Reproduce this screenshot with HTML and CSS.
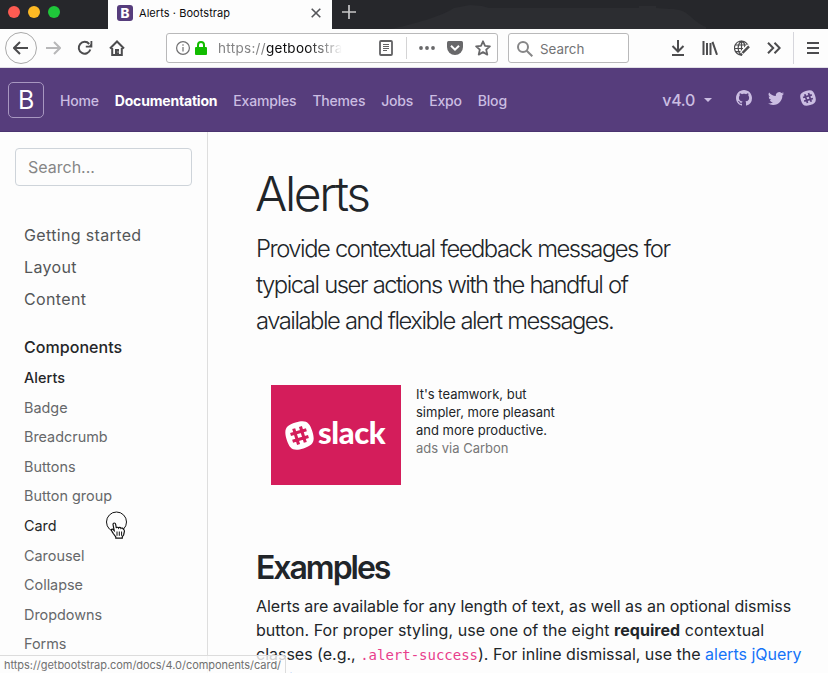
FILE: index.html
```html
<!DOCTYPE html>
<html lang="en">
<head>
<meta charset="utf-8">
<title>Alerts · Bootstrap</title>
<link rel="stylesheet" href="styles.css">
</head>
<body>
<div class="window">
  <header class="tabs">
    <svg class="tabs-shade" width="496" height="29" viewBox="0 0 496 29"><path d="M58 29C80 25 112 15 122 8l16-3 12 1 7 2h150V6h17v2l14 1c20 0 18 10 36 18v2z"/></svg>
    <div class="lights"><i class="red"></i><i class="yellow"></i><i class="green"></i></div>
    <div class="tab">
      <span class="favicon">B</span>
      <span class="tab-title">Alerts · Bootstrap</span>
      <svg class="close" width="10" height="10" viewBox="0 0 10 10"><path d="M.7.7l8.6 8.6M9.3.7L.7 9.3"/></svg>
    </div>
    <svg class="plus" width="14" height="14" viewBox="0 0 14 14"><path d="M7 0v14M0 7h14"/></svg>
  </header>

  <div class="toolbar">
    <span class="slot back"><svg width="16" height="14" viewBox="0 0 16 14"><path d="M15 7H1.5M7 1L1 7l6 6"/></svg></span>
    <span class="slot forward"><svg width="16" height="14" viewBox="0 0 16 14"><path d="M1 7h13.5M9 1l6 6-6 6"/></svg></span>
    <span class="slot"><svg width="16" height="16" viewBox="0 0 16 16"><path d="M13.300 9.500A5.900 5.900 0 1 1 12.200 4"/><path class="solid" d="M15.300 1v6.500H8.800V5.700h3.500L13.500 4V1z"/></svg></span>
    <span class="slot"><svg width="16" height="16" viewBox="0 0 16 16"><path d="M1 8.500L8 1.500l7 7M3.200 8v7h9.600V8"/><path class="solid" d="M6 9h4v5H6z"/><path class="knob" d="M8.500 11.500h1v1h-1z"/></svg></span>
    <div class="url">
      <svg class="info" width="14" height="14" viewBox="0 0 14 14"><circle cx="7" cy="7" r="6.400"/><path d="M7 6v4.500M7 3.300v1.500"/></svg>
      <svg class="lock" width="12" height="14" viewBox="0 0 12 14"><path class="shackle" d="M3 7V4a3 3 0 0 1 6 0v3"/><rect x="0" y="6" width="12" height="8" rx="1"/></svg>
      <span class="address"><b>https://</b>getbootstra</span>
      <svg class="reader" width="14" height="16" viewBox="0 0 14 16"><rect x="1" y="1" width="12" height="14" rx="1"/><path d="M4 4.500h6M4 6.500h6M4 8.500h6M4 10.500h4"/></svg>
      <i class="url-line"></i>
      <span class="mini"><svg width="16" height="4" viewBox="0 0 16 4"><g class="solid"><circle cx="2" cy="2" r="1.900"/><circle cx="8" cy="2" r="1.900"/><circle cx="14" cy="2" r="1.900"/></g></svg></span>
      <span class="mini"><svg width="16" height="14" viewBox="0 0 16 14"><path class="solid" d="M1.500 0h13Q16 0 16 1.500V6a8 8 0 0 1-16 0V1.500Q0 0 1.500 0z"/><path class="check" d="M4 4.700l4 3.900 4-3.900"/></svg></span>
      <span class="mini"><svg width="16" height="16" viewBox="0 0 16 16"><path class="star" d="M8 1.300l2 4.500 4.900.5-3.700 3.300 1.100 5L8 12.100l-4.300 2.500 1.100-5L1.100 6.300 6 5.800z"/></svg></span>
    </div>
    <div class="find">
      <svg width="16" height="16" viewBox="0 0 16 16"><circle cx="6" cy="6" r="5"/><path d="M9.700 9.700L15.300 15.300"/></svg>
      <span>Search</span>
    </div>
    <div class="tools">
      <span class="slot"><svg width="14" height="16" viewBox="0 0 14 16"><path d="M7 0v11M1.500 6L7 11.500 12.500 6M1 15h12"/></svg></span>
      <span class="slot"><svg width="16" height="14" viewBox="0 0 16 14"><path d="M1.500 0v14M5 2v12M8.500 2v12M10.500.8L15 13.800"/></svg></span>
      <span class="slot"><svg class="globe" width="16" height="16" viewBox="0 0 16 16"><path d="M14 5.500A7 7 0 1 0 8 15M7.500 1C3.200 4 3.200 11 6.500 14.500M7.500 1C11 3 11 6 10.500 7.500M7.500 1v11M1.500 5H13M1 8.500h8M2 11.700h5"/><path class="gap" d="M15 6L8 13.500"/><path class="pen" d="M15 6.300L8.500 13M8 13.700L6.300 15.200"/></svg></span>
      <span class="slot"><svg width="14" height="12" viewBox="0 0 14 12"><path d="M1 .7L6.200 6 1 11.300M7.500.7L12.700 6l-5.200 5.300"/></svg></span>
      <i class="tool-line"></i>
      <span class="slot"><svg width="12" height="12" viewBox="0 0 12 12"><path d="M0 1h12M0 6h12M0 11h12"/></svg></span>
    </div>
  </div>

  <nav class="navbar">
    <a class="brand">B</a>
    <a>Home</a><a class="active">Documentation</a><a>Examples</a><a>Themes</a><a>Jobs</a><a>Expo</a><a>Blog</a>
    <div class="nav-right">
      <span class="version">v4.0</span><i class="caret"></i>
      <svg width="16" height="16" viewBox="0 0 16 16"><path d="M8 0C3.580 0 0 3.580 0 8c0 3.540 2.290 6.530 5.470 7.590.4.070.55-.17.55-.38 0-.19-.01-.82-.01-1.490-2.010.37-2.530-.49-2.690-.94-.09-.23-.48-.94-.82-1.130-.28-.15-.68-.52-.01-.53.63-.01 1.080.58 1.230.82.72 1.210 1.870.87 2.330.66.07-.52.28-.87.51-1.070-1.780-.2-3.640-.89-3.640-3.950 0-.87.31-1.590.82-2.150-.08-.2-.36-1.020.08-2.120 0 0 .67-.21 2.200.82.64-.18 1.320-.27 2-.27s1.360.09 2 .27c1.530-1.040 2.200-.82 2.200-.82.44 1.100.16 1.920.08 2.120.51.56.82 1.270.82 2.150 0 3.070-1.870 3.750-3.650 3.950.29.25.54.73.54 1.480 0 1.070-.01 1.930-.01 2.200 0 .21.15.46.55.38A8 8 0 0 0 16 8c0-4.420-3.580-8-8-8z"/></svg>
      <svg width="16" height="16" viewBox="0 0 16 16"><path d="M5.026 15c6.038 0 9.341-5.003 9.341-9.334 0-.14 0-.282-.006-.422A6.685 6.685 0 0 0 16 3.542a6.658 6.658 0 0 1-1.889.518 3.301 3.301 0 0 0 1.447-1.817 6.533 6.533 0 0 1-2.087.793A3.286 3.286 0 0 0 7.875 6.030a9.325 9.325 0 0 1-6.767-3.429 3.289 3.289 0 0 0 1.018 4.382A3.323 3.323 0 0 1 .64 6.575v.045a3.288 3.288 0 0 0 2.632 3.218 3.203 3.203 0 0 1-.865.115 3.230 3.230 0 0 1-.614-.057 3.283 3.283 0 0 0 3.067 2.277A6.588 6.588 0 0 1 .78 13.580a6.320 6.320 0 0 1-.78-.045A9.344 9.344 0 0 0 5.026 15z"/></svg>
      <svg width="16" height="16" viewBox="0 0 28 28"><g transform="rotate(-17 14 14)"><path d="M14 1c10 0 13 3 13 13s-3 13-13 13S1 24 1 14 4 1 14 1z"/><path class="hash" d="M10.600 6v16M17.400 6v16M6 10.600h16M6 17.400h16"/></g></svg>
    </div>
  </nav>

  <div class="page">
    <aside class="sidebar">
      <div class="search">Search...</div>
      <a class="section first">Getting started</a>
      <a class="section">Layout</a>
      <a class="section">Content</a>
      <a class="section current">Components</a>
      <a class="sub active">Alerts</a>
      <a class="sub">Badge</a>
      <a class="sub">Breadcrumb</a>
      <a class="sub">Buttons</a>
      <a class="sub">Button group</a>
      <a class="sub hover">Card</a>
      <a class="sub">Carousel</a>
      <a class="sub">Collapse</a>
      <a class="sub">Dropdowns</a>
      <a class="sub">Forms</a>
    </aside>
    <main>
      <h1>Alerts</h1>
      <p class="lead">Provide contextual feedback messages for<br>typical user actions with the handful of<br>available and flexible alert messages.</p>
      <div class="ad">
        <div class="slack">
          <svg width="29" height="29" viewBox="0 0 28 28"><g transform="rotate(-17 14 14)"><path d="M14 1c10 0 13 3 13 13s-3 13-13 13S1 24 1 14 4 1 14 1z"/><path class="hash" d="M10.600 6v16M17.400 6v16M6 10.600h16M6 17.400h16"/></g></svg>
          <span>slack</span>
        </div>
        <p>It's teamwork, but<br>simpler, more pleasant<br>and more productive.<br><span>ads via Carbon</span></p>
      </div>
      <h2>Examples</h2>
      <p class="body"><span class="l1">Alerts are available for any length of text, as well as an optional dismiss</span><br><span class="l2">button. For proper styling, use one of the eight <strong>required</strong> contextual</span><br><span class="l3">classes (e.g., <code>.alert-success</code>). For inline dismissal, use the <a>alerts jQuery</a></span><br><span class="l4"><a>plugin</a>.</span></p>
    </main>
  </div>

  <div class="status">https://getbootstrap.com/docs/4.0/components/card/</div>
  <svg class="pointer" width="24" height="32" viewBox="0 0 24 32"><circle cx="11.500" cy="12" r="10"/><path class="hand" d="M8 14.500c0-2 2.500-2 2.700 0l.6 3.500c.3-1 2-1 2.300 0 .5-1 2.200-.6 2.400.4.800-.8 2.200-.3 2.300.8.900.4 1.200 1.300 1.100 2.300l-.8 3.500-1.300 1.700v1.500h-6.500V27l-2.700-3.700c-.8-1.600-2.300-3-1.600-3.800.8-.8 1.900.2 2.700 1z"/><path class="fingers" d="M12 21.500v4.300M14.300 21.500v4.300M16.600 21.500v4.300"/></svg>
</div>
</body>
</html>
```
FILE: styles.css
```css
* { box-sizing: border-box; }
body { margin: 0; background: #fdfdfd; font-family: Inter, "Liberation Sans", sans-serif; color: #212529; }
p, h1, h2 { margin: 0; }
svg { display: block; flex: none; }
.window { position: relative; width: 828px; height: 673px; overflow: hidden; display: flex; flex-direction: column; }

.tabs { position: relative; flex: none; height: 29px; background: #26272b; display: flex; }
.tabs-shade { position: absolute; left: 332px; top: 0; fill: #2c2d31; }
.lights { width: 108px; display: flex; gap: 8px; padding: 6px 0 0 8px; }
.lights i { width: 12px; height: 12px; border-radius: 50%; }
.red { background: #fd5b52; }
.yellow { background: #fdb924; }
.green { background: #1fc73a; }
.tab { width: 224px; background: #fdfdfd; display: flex; align-items: center; padding: 0 11px 3px 9px; color: #0c0c0d; }
.favicon { width: 16px; height: 16px; border-radius: 3px; background: #563d7c; color: #fff; font-size: 13.5px; font-weight: 800; line-height: 16px; text-align: center; }
.tab-title { font-size: 11px; margin-left: 6px; flex: 1; letter-spacing: .06px; }
.close { stroke: #55565a; stroke-width: 1.6; }
.plus { position: relative; margin: 5px 0 0 10px; stroke: #c7c7c8; stroke-width: 1.7; }

.toolbar { flex: none; height: 39px; display: flex; align-items: center; padding-left: 5px; border-bottom: 1px solid #e1dfe6; background: #fdfdfd; }
.slot { flex: none; width: 32px; height: 32px; display: flex; align-items: center; justify-content: center; }
.slot svg, .reader { fill: none; stroke: #4c4c4e; stroke-width: 2; }
.slot svg .solid { fill: #4c4c4e; stroke: none; }
.slot svg .knob { fill: #fff; stroke: none; }
.back { border: 1px solid #aaa; border-radius: 50%; }
.forward svg { stroke: #b8b8b9; }
.url { flex: none; width: 332px; height: 30px; margin-left: 33px; border: 1px solid #b9b9ba; border-radius: 3px; display: flex; align-items: center; padding-left: 9px; background: #fff; }
.info { fill: none; stroke: #707071; stroke-width: 1.2; }
.lock { margin-left: 5px; fill: #12bc00; }
.shackle { fill: none; stroke: #12bc00; stroke-width: 2; }
.address { width: 124px; margin-left: 11px; white-space: nowrap; font-size: 13.500px; letter-spacing: .3px; color: #0c0c0d; -webkit-mask-image: linear-gradient(90deg, #000 72%, transparent); mask-image: linear-gradient(90deg, #000 72%, transparent); }
.address b { font-weight: 400; color: #848485; }
.reader { margin-left: 37px; stroke: #626264; stroke-width: 1.8; }
.reader path { stroke-width: 1; }
.url-line { width: 1px; height: 22px; background: #d4d4d5; margin: 0 6px 0 13px; }
.mini { width: 28px; display: flex; justify-content: center; }
.mini .solid { fill: #68686a; }
.check { fill: none; stroke: #fff; stroke-width: 2; }
.star { fill: none; stroke: #68686a; stroke-width: 1.8; stroke-linejoin: round; }
.find { flex: none; width: 121px; height: 30px; margin-left: 10px; border: 1px solid #b9b9ba; border-radius: 3px; display: flex; align-items: center; gap: 7px; padding: 1px 0 0 8px; font-size: 13.400px; color: #737374; background: #fff; }
.find svg { fill: none; stroke: #868687; stroke-width: 2; }
.tools { flex: none; display: flex; align-items: center; margin-left: 33px; }
.tool-line { flex: none; width: 1px; height: 32px; background: #d6d6dc; margin: 0 3px; }
.slot svg.globe { stroke-width: 1.2; }
.globe .gap { stroke: #fdfdfd; stroke-width: 5; }
.globe .pen { stroke-width: 2.5; }

.navbar { flex: none; height: 64px; background: #563d7c; border-bottom: 1px solid #4a3470; display: flex; align-items: center; padding-left: 8px; font-size: 14px; font-weight: 500; letter-spacing: -.19px; color: #cbbde2; }
.navbar a { margin-right: 16px; padding-top: 2px; }
.navbar .active { color: #fff; font-weight: 700; }
.navbar .brand { width: 36px; height: 36px; margin-top: 1px; padding: 0; border: 1px solid #a797c0; border-radius: 5px; font-size: 25px; font-weight: 400; line-height: 35px; text-align: center; color: #fff; }
.nav-right { margin-left: auto; margin-right: 12px; display: flex; align-items: center; }
.nav-right svg { fill: #cbbde2; margin: -4px 0 0 16px; }
.version { font-size: 16px; letter-spacing: -.3px; }
.caret { margin: 0 8px 0 9px; border: 4.500px solid transparent; border-top-color: #cbbde2; border-bottom: 0; }
.nav-right .hash { stroke: #563d7c; }
.hash { fill: none; stroke-width: 3; }

.page { flex: 1; min-height: 0; display: flex; }
.sidebar { flex: none; width: 208px; height: 560px; padding: 16px 15px 0; border-right: 1px solid #dedede; }
.search { height: 38px; border: 1px solid #ced4da; border-radius: 4px; padding: 0 12px; line-height: 37px; font-size: 16px; color: #868686; }
.sidebar a { display: block; padding-left: 9px; }
.section { height: 32px; line-height: 32px; font-size: 16px; letter-spacing: .35px; color: #545658; }
.first { margin-top: 33px; }
.current { margin-top: 16px; font-weight: 500; letter-spacing: .05px; color: #252628; }
.sub { height: 29.600px; line-height: 29.600px; font-size: 14.400px; color: #66686a; }
.sub.active { font-weight: 500; letter-spacing: .1px; color: #252628; }
.sub.hover { color: #252628; }

main { padding: 32px 0 0 48px; white-space: nowrap; }
h1 { font-size: 48px; font-weight: 300; line-height: 60px; letter-spacing: -2.400px; text-indent: -1px; }
.lead { margin-top: 7px; font-size: 23.800px; font-weight: 300; line-height: 36px; letter-spacing: -1.480px; word-spacing: .5px; }
.ad { display: flex; gap: 15px; margin: 46px 0 0 15px; }
.slack { width: 130px; height: 100px; background: #d41d5b; display: flex; align-items: center; gap: 4px; padding-left: 14px; }
.slack svg { fill: #fff; }
.slack .hash { stroke: #d41d5b; }
.slack span { font: 900 31px/40px Lato, sans-serif; letter-spacing: -.4px; color: #fff; margin-top: -7px; }
.ad p { font-size: 13px; line-height: 18px; }
.ad p span { color: #777; }
h2 { margin-top: 64px; font-size: 32px; font-weight: 600; line-height: 38px; letter-spacing: -2.020px; }
.body { margin-top: 7px; font-size: 16px; line-height: 24px; }
.body a { color: #1473f8; }
.l1 { letter-spacing: -.03px; }
.l2 { letter-spacing: .05px; }
.l3 { letter-spacing: -.01px; }
.l4 { display: inline-block; padding-top: 1px; }
.body strong { font-weight: 700; }
.body code { font: 14px "DejaVu Sans Mono", monospace; color: #e83e8c; }

.status { position: absolute; left: 0; bottom: 0; width: 286px; height: 18px; padding-left: 4px; border: 1px solid #dcdcdc; border-width: 1px 1px 0 0; border-radius: 0 3px 0 0; background: rgba(253, 253, 253, .8); font-size: 11px; line-height: 19px; letter-spacing: -.04px; white-space: nowrap; color: #707070; }
.pointer { position: absolute; left: 105px; top: 510px; fill: none; stroke: #111; stroke-width: 1; }
.pointer .hand { fill: #fff; stroke-width: 1.2; }
```
